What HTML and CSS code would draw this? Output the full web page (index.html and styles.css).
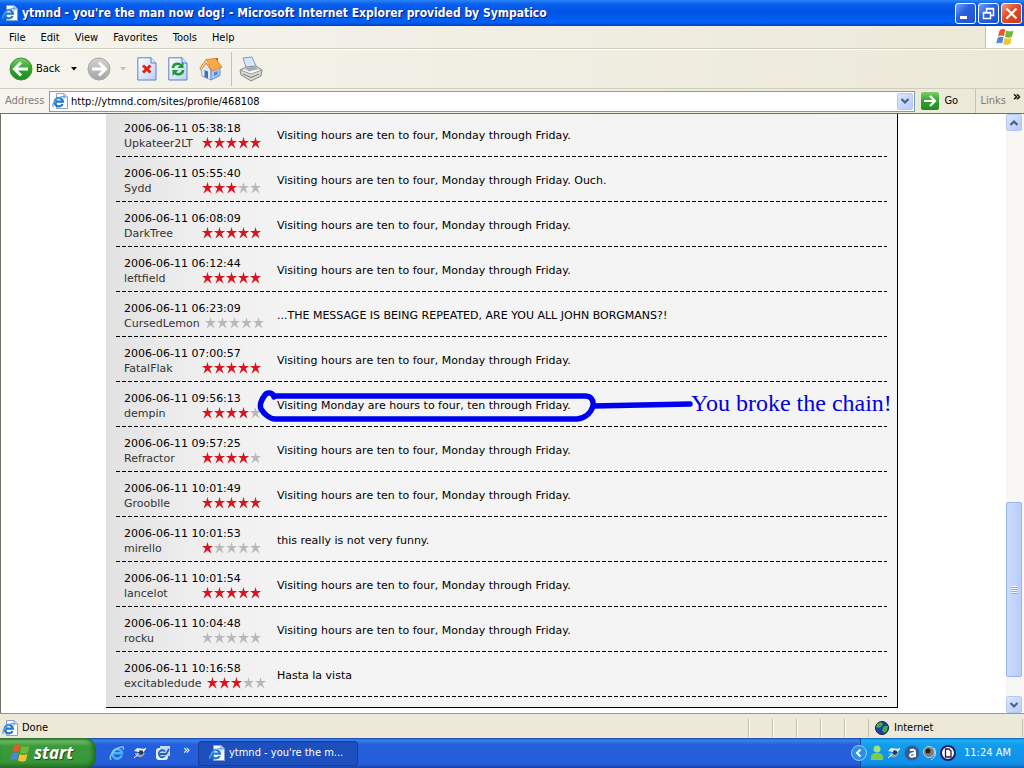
FILE: index.html
```html
<!DOCTYPE html>
<html lang="en">
<head>
<meta charset="utf-8">
<title>ytmnd - you're the man now dog!</title>
<link rel="stylesheet" href="styles.css">
</head>
<body>
<svg class="defs" aria-hidden="true">
  <defs>
    <linearGradient id="green" x1="0" y1="0" x2="0" y2="1"><stop offset="0" stop-color="#7ccf67"/><stop offset=".5" stop-color="#2fa32c"/><stop offset="1" stop-color="#1f8a22"/></linearGradient>
    <linearGradient id="grey" x1="0" y1="0" x2="0" y2="1"><stop offset="0" stop-color="#d2d2cf"/><stop offset="1" stop-color="#a4a4a2"/></linearGradient>
    <linearGradient id="paper" x1="0" y1="0" x2="1" y2="1"><stop offset="0" stop-color="#fff"/><stop offset="1" stop-color="#b9d0f8"/></linearGradient>
    <symbol id="five" viewBox="0 0 60 12">
      <g id="star"><path d="M5.500 0 6.600 4H11L7.500 6.600 9.500 11.500 5.500 8.300 1.500 11.500 3.500 6.600 0 4H4.400Z"/></g>
      <use href="#star" x="12"/><use href="#star" x="24"/><use href="#star" x="36"/><use href="#star" x="48"/>
    </symbol>
    <symbol id="e" viewBox="0 0 16 16">
      <path d="M12.700 10.600A4.800 4.800 0 1 1 13 8.200H5" fill="none" stroke="#4fb0f5" stroke-width="2.600"/>
      <path d="M2.400 14.500C-1.500 14 4 5 9.500 2.800 13.500 1 15.600 1.600 14 4.800" fill="none" stroke="#8fd2fb" stroke-width="1.300"/>
    </symbol>
    <symbol id="iepage" viewBox="0 0 16 16">
      <path d="M4.500.5H12L15.500 4V15.500H4.500Z" fill="#fff" stroke="#8a9fc8"/>
      <path d="M12 .5V4H15.500" fill="#c3d3ef" stroke="#8a9fc8"/>
      <path d="M10.600 11A4.200 4.200 0 1 1 11 8.600H4" fill="none" stroke="#2277cc" stroke-width="2.200"/>
      <path d="M1.500 14C-1 12 4 5.500 8.500 4 12 2.600 12.800 3.500 11.600 5.600" fill="none" stroke="#4fa8ea" stroke-width="1.200"/>
    </symbol>
    <symbol id="flag" viewBox="0 0 20 18">
      <path d="M4.500 2.400C6.500.8 8.600.8 10.300 1.800L8.900 8.200C7 7.200 5 7.400 3 8.700Z" fill="#e8562a"/>
      <path d="M11.300 2.400C13.500 3.700 16 3.500 18.500 2.400L17 8.800C14.600 10 12 9.900 9.900 8.800Z" fill="#6cbb36"/>
      <path d="M2.700 9.800C4.700 8.400 6.800 8.300 8.600 9.300L7.200 15.300C5.300 14.200 3.400 14.500 1.200 15.800Z" fill="#4a86df"/>
      <path d="M9.600 9.900C11.700 11 14.200 11 16.700 9.900L15.300 16C12.900 17.200 10.400 17 8.200 15.900Z" fill="#f9c02d"/>
    </symbol>
    <symbol id="doc" viewBox="0 0 20 24">
      <path d="M.8.8H14L19 6V23H.8Z" fill="url(#paper)" stroke="#5d7fc4"/>
      <path d="M14 .8V6H19" fill="#dbe6fb" stroke="#5d7fc4"/>
    </symbol>
    <symbol id="down" viewBox="0 0 10 10"><path d="M1.500 3 5 6.500 8.500 3" fill="none" stroke="#4d6185" stroke-width="2.200"/></symbol>
    <symbol id="sat" viewBox="0 0 14 12">
      <path d="M1 4 4 1 13 2 10 6Z" fill="#dfe5ea"/><path d="M2 6C2 11 10 12 12 6Z" fill="#9aa6af"/><circle cx="8" cy="5.500" r="2.200" fill="#2e3a48"/><path d="M1 11 5 7.500M10 3.500 13 1" stroke="#fff" fill="none"/>
    </symbol>
  </defs>
</svg>

<header class="titlebar">
  <svg class="i16"><use href="#iepage"/></svg>
  <h1>ytmnd - you're the man now dog! - Microsoft Internet Explorer provided by Sympatico</h1>
  <div class="winbtns">
    <button aria-label="Minimize"><svg viewBox="0 0 19 19"><path d="M4 13.500H11" stroke="#fff" stroke-width="3"/></svg></button>
    <button aria-label="Restore"><svg viewBox="0 0 19 19"><path d="M7.500 8V4.500H14.500V11.500H12M7 5H15M4.500 8.500H11.500V14.500H4.500ZM4 9H12" fill="none" stroke="#fff" stroke-width="1.500"/></svg></button>
    <button class="close" aria-label="Close"><svg viewBox="0 0 19 19"><path d="M4.500 4.500 14.500 14.500M14.500 4.500 4.500 14.500" stroke="#fff" stroke-width="2.200"/></svg></button>
  </div>
</header>

<nav class="menubar">
  <button>File</button><button>Edit</button><button>View</button><button>Favorites</button><button>Tools</button><button>Help</button>
  <div class="brand"><svg width="20" height="18"><use href="#flag"/></svg></div>
</nav>

<div class="toolbar">
  <button class="back"><svg width="24" height="24" viewBox="0 0 24 24"><circle cx="12" cy="12" r="11" fill="url(#green)" stroke="#3f8f38"/><path d="M19 12H6M12 5.500 5.500 12 12 18.500" fill="none" stroke="#fff" stroke-width="3"/></svg>Back</button>
  <button class="arrow" aria-label="Back history"><svg width="6" height="4" viewBox="0 0 6 4"><path d="M0 0H6L3 3.500Z"/></svg></button>
  <button aria-label="Forward"><svg width="24" height="24" viewBox="0 0 24 24"><circle cx="12" cy="12" r="11" fill="url(#grey)" stroke="#aaa9a4"/><path d="M5 12H18M12 5.500 18.500 12 12 18.500" fill="none" stroke="#fff" stroke-width="3"/></svg></button>
  <button class="arrow off" aria-label="Forward history"><svg width="6" height="4" viewBox="0 0 6 4"><path d="M0 0H6L3 3.500Z"/></svg></button>
  <div class="tools">
    <button aria-label="Stop"><svg width="20" height="24"><use href="#doc"/><path d="M6 8.500 13.500 15.500M13.500 8.500 6 15.500" stroke="#e8200e" stroke-width="3"/></svg></button>
    <button aria-label="Refresh"><svg width="20" height="24"><use href="#doc"/><path d="M5 11C5 7 10 5.500 13 8" fill="none" stroke="#1c9a2c" stroke-width="2.600"/><path d="M15.500 5V11H9.500Z" fill="#1c9a2c"/><path d="M15 13C15 17 10 18.500 7 16" fill="none" stroke="#1c9a2c" stroke-width="2.600"/><path d="M4.500 19V13H10.500Z" fill="#1c9a2c"/></svg></button>
    <button aria-label="Home"><svg width="24" height="24" viewBox="0 0 24 24"><path d="M16 1H19V8H16Z" fill="#c9552b"/><path d="M2 12 7 6 12 13V23L3 19Z" fill="#dfeafc" stroke="#8aa5d4"/><path d="M12 12 21 10V18.500L12 23Z" fill="#a9c6f3" stroke="#6e8dc4"/><path d="M7 2.500 16.500 1.500 23 10 13 14Z" fill="#f9a94a" stroke="#dd8a35"/><path d="M7 2.500 .8 11.500 2.500 12.500 7.200 6 12 13.500" fill="#fbd08b" stroke="#dd8a35"/><path d="M5.500 13 9 14.500V21.500L5.500 20Z" fill="#4a6eb5"/><path d="M15 15.500 18.500 14V17.500L15 19Z" fill="#5f83c8"/></svg></button>
  </div>
  <button class="print" aria-label="Print"><svg width="24" height="26" viewBox="0 0 24 26"><path d="M4 2 13 1 18 12 8 14Z" fill="#d7e5fb" stroke="#7f9ac8"/><path d="M1 14 7 11 17 10 23 14 22 20 12 25 2 19Z" fill="#d9d9d4" stroke="#888"/><path d="M1 14 12 18 23 14" fill="#f6f6f2" stroke="#9c9c98"/><path d="M6 12 16 10.500 19 13 10 15.500Z" fill="#a2aab6"/><path d="M4 18 12 21.500 20 18" fill="none" stroke="#777"/></svg></button>
</div>

<form class="address">
  <label for="url">Address</label>
  <div class="combo">
    <svg class="i16"><use href="#iepage"/></svg>
    <input id="url" type="text" value="http://ytmnd.com/sites/profile/468108">
    <button type="button" class="xp" aria-label="Show history"><svg><use href="#down"/></svg></button>
  </div>
  <button type="button" class="go"><svg width="18" height="18" viewBox="0 0 18 18"><rect width="18" height="18" rx="2" fill="url(#green)"/><path d="M3 9H14M9 4 14 9 9 14" fill="none" stroke="#fff" stroke-width="2.200"/></svg>Go</button>
  <div class="links"><span>Links</span><b>»</b></div>
</form>

<div class="view">
  <main class="page">
    <ul class="comments">
      <li><div class="who"><time>2006-06-11 05:38:18</time><div><a href="#">Upkateer2LT</a><svg class="stars"><use href="#five"/><svg width="60"><use class="on" href="#five" width="60" height="12"/></svg></svg></div></div><p>Visiting hours are ten to four, Monday through Friday.</p></li>
      <li><div class="who"><time>2006-06-11 05:55:40</time><div><a href="#">Sydd</a><svg class="stars"><use href="#five"/><svg width="36"><use class="on" href="#five" width="60" height="12"/></svg></svg></div></div><p>Visiting hours are ten to four, Monday through Friday. Ouch.</p></li>
      <li><div class="who"><time>2006-06-11 06:08:09</time><div><a href="#">DarkTree</a><svg class="stars"><use href="#five"/><svg width="60"><use class="on" href="#five" width="60" height="12"/></svg></svg></div></div><p>Visiting hours are ten to four, Monday through Friday.</p></li>
      <li><div class="who"><time>2006-06-11 06:12:44</time><div><a href="#">leftfield</a><svg class="stars"><use href="#five"/><svg width="60"><use class="on" href="#five" width="60" height="12"/></svg></svg></div></div><p>Visiting hours are ten to four, Monday through Friday.</p></li>
      <li><div class="who"><time>2006-06-11 06:23:09</time><div><a href="#">CursedLemon</a><svg class="stars"><use href="#five"/></svg></div></div><p>...THE MESSAGE IS BEING REPEATED, ARE YOU ALL JOHN BORGMANS?!</p></li>
      <li><div class="who"><time>2006-06-11 07:00:57</time><div><a href="#">FatalFlak</a><svg class="stars"><use href="#five"/><svg width="60"><use class="on" href="#five" width="60" height="12"/></svg></svg></div></div><p>Visiting hours are ten to four, Monday through Friday.</p></li>
      <li><div class="who"><time>2006-06-11 09:56:13</time><div><a href="#">dempin</a><svg class="stars"><use href="#five"/><svg width="48"><use class="on" href="#five" width="60" height="12"/></svg></svg></div></div><p>Visiting Monday are hours to four, ten through Friday.</p>
        <div class="note"><svg width="436" height="36" viewBox="0 0 436 36"><path d="M17 8C16 3 10 3 8 6 5 10 2 15 4 20 7 25 13 30 18 30H320C328 29 334 24 336 17 337 10 333 7 328 7H17M336 17 433 15" fill="none" stroke="#0000f0" stroke-width="5.500" stroke-linecap="round" stroke-linejoin="round"/></svg><span>You broke the chain!</span></div></li>
      <li><div class="who"><time>2006-06-11 09:57:25</time><div><a href="#">Refractor</a><svg class="stars"><use href="#five"/><svg width="48"><use class="on" href="#five" width="60" height="12"/></svg></svg></div></div><p>Visiting hours are ten to four, Monday through Friday.</p></li>
      <li><div class="who"><time>2006-06-11 10:01:49</time><div><a href="#">Grooblle</a><svg class="stars"><use href="#five"/><svg width="60"><use class="on" href="#five" width="60" height="12"/></svg></svg></div></div><p>Visiting hours are ten to four, Monday through Friday.</p></li>
      <li><div class="who"><time>2006-06-11 10:01:53</time><div><a href="#">mirello</a><svg class="stars"><use href="#five"/><svg width="12"><use class="on" href="#five" width="60" height="12"/></svg></svg></div></div><p>this really is not very funny.</p></li>
      <li><div class="who"><time>2006-06-11 10:01:54</time><div><a href="#">lancelot</a><svg class="stars"><use href="#five"/><svg width="60"><use class="on" href="#five" width="60" height="12"/></svg></svg></div></div><p>Visiting hours are ten to four, Monday through Friday.</p></li>
      <li><div class="who"><time>2006-06-11 10:04:48</time><div><a href="#">rocku</a><svg class="stars"><use href="#five"/></svg></div></div><p>Visiting hours are ten to four, Monday through Friday.</p></li>
      <li><div class="who"><time>2006-06-11 10:16:58</time><div><a href="#">excitabledude</a><svg class="stars"><use href="#five"/><svg width="36"><use class="on" href="#five" width="60" height="12"/></svg></svg></div></div><p>Hasta la vista</p></li>
    </ul>
  </main>
  <div class="scroll">
    <button class="xp up" aria-label="Scroll up"><svg><use href="#down"/></svg></button>
    <div class="track"><div class="thumb"><i></i></div></div>
    <button class="xp" aria-label="Scroll down"><svg><use href="#down"/></svg></button>
  </div>
</div>

<footer class="status">
  <svg class="i16"><use href="#iepage"/></svg><span class="done">Done</span>
  <i></i><i></i><i></i><i></i><i></i>
  <div class="zone"><svg width="14" height="14" viewBox="0 0 14 14"><circle cx="7" cy="7" r="6.500" fill="#1c3fae" stroke="#10204a"/><path d="M2 3 6 1 8 3 6 6 3 7 1 6ZM9 5 13 5 12 10 9 12 7 9Z" fill="#3cae4a"/></svg>Internet</div>
</footer>

<div class="taskbar">
  <button class="start"><svg width="22" height="20"><use href="#flag"/></svg>start</button>
  <div class="quick">
    <button aria-label="Internet Explorer"><svg class="i16"><use href="#e"/></svg></button>
    <button aria-label="Messenger"><svg width="14" height="12"><use href="#sat"/></svg></button>
    <button aria-label="Outlook Express"><svg class="i16" viewBox="0 0 16 16"><rect x="1" y="3" width="12" height="12" rx="3" fill="#e8f1fb"/><path d="M5 1H15V11H5Z" fill="#c2dbf5"/><path d="M10 11A3.500 3.500 0 1 1 10 6.500M5 9H11L14 4" fill="none" stroke="#1f62bd" stroke-width="1.800"/></svg></button>
    <span>»</span>
  </div>
  <button class="task"><svg class="i16"><use href="#iepage"/></svg>ytmnd - you're the m...</button>
  <div class="tray">
    <button class="chev" aria-label="Show hidden icons"><svg width="16" height="16" viewBox="0 0 16 16"><circle cx="8" cy="8" r="7.500" fill="#2f8fe8" stroke="#8fd0fb"/><path d="M9.500 4.500 6 8 9.500 11.500" fill="none" stroke="#fff" stroke-width="2"/></svg></button>
    <svg width="14" height="16" viewBox="0 0 14 16"><circle cx="7" cy="4" r="3.500" fill="#a5e07c"/><path d="M1 15C0 9 3 8 7 8S14 9 13 15Z" fill="#7dcb52"/></svg>
    <svg width="14" height="12"><use href="#sat"/></svg>
    <svg width="16" height="16" viewBox="0 0 16 16"><circle cx="8" cy="8" r="7.500" fill="#3a5a92"/><path d="M6 5.500C8 4 11 4.500 11 7V12M11 8C7 8 6 9 6 10.500 6.500 12.500 10 12 11 10" fill="none" stroke="#fff" stroke-width="2"/></svg>
    <svg width="14" height="16" viewBox="0 0 14 16"><circle cx="6" cy="7" r="5.500" fill="#787d80" stroke="#c9ced0"/><circle cx="5" cy="6" r="2.500" fill="#222"/><path d="M11 3C14 8 12 13 8 15" fill="none" stroke="#cfe6fa"/></svg>
    <svg width="16" height="16" viewBox="0 0 16 16"><circle cx="8" cy="8" r="7" fill="#fff" stroke="#141b78" stroke-width="2"/><path d="M5.500 4H9L11 6V12H5.500Z" fill="#fff" stroke="#222" stroke-width="1.300"/></svg>
    <time>11:24 AM</time>
  </div>
</div>
</body>
</html>
```

FILE: styles.css
```css
* { box-sizing: border-box; }
body {
  margin: 0;
  height: 100vh;
  display: flex;
  flex-direction: column;
  overflow: hidden;
  font: 11px/14px "DejaVu Sans Condensed", "DejaVu Sans", sans-serif;
  color: #000;
  background: #ece9d8;
}
button {
  border: 0;
  padding: 0;
  background: none;
  font: inherit;
  color: inherit;
  display: flex;
  align-items: center;
}
svg { flex: none; display: block; }
.defs { position: absolute; width: 0; height: 0; }
.i16 { width: 16px; height: 16px; }

.titlebar {
  flex: none;
  height: 26px;
  display: flex;
  align-items: center;
  gap: 4px;
  padding: 0 2px;
  background: linear-gradient(#2a86f8 0, #0a5fee 4px, #0054e3 12px, #0062fa 22px, #0040c0 26px);
}
.titlebar h1 {
  flex: 1;
  margin: 0;
  font: bold 12px/18px "DejaVu Sans Condensed", "DejaVu Sans", sans-serif;
  color: #fff;
  text-shadow: 1px 1px #0a1883;
  white-space: nowrap;
}
.winbtns { display: flex; gap: 2px; }
.winbtns button {
  width: 21px;
  height: 21px;
  border: 1px solid #fff;
  border-radius: 3px;
  background: linear-gradient(135deg, #7ba4f8, #2a62e0 40%, #1e50d0);
}
.winbtns .close { background: linear-gradient(135deg, #f0a088, #df5030 40%, #c83a14); }

.menubar {
  flex: none;
  height: 23px;
  display: flex;
  align-items: center;
  gap: 15px;
  padding-left: 9px;
  background: linear-gradient(90deg, #f5f4ee, #ece9d8);
  border-bottom: 1px solid #d0cdbf;
}
.menubar button { padding-top: 2px; }
.brand {
  align-self: stretch;
  margin-left: auto;
  width: 39px;
  display: flex;
  align-items: center;
  justify-content: center;
  background: #fff;
  border-left: 1px solid #c5c2b0;
}

.toolbar {
  flex: none;
  height: 40px;
  display: flex;
  align-items: center;
  padding-left: 9px;
  background: linear-gradient(90deg, #f5f4ee, #ece9d8);
  border-top: 1px solid #fff;
  border-bottom: 1px solid #d0cdbf;
}
.back { gap: 3px; }
.arrow { width: 27px; justify-content: center; }
.off { fill: #c2bfb0; width: 24px; }
.tools {
  display: flex;
  gap: 11px;
  padding: 0 8px 0 2px;
  height: 34px;
  border-right: 1px solid #c5c2b0;
}
.print { padding-left: 7px; }

.address {
  flex: none;
  height: 24px;
  margin: 0;
  display: flex;
  align-items: center;
  padding: 0 3px 0 5px;
  background: linear-gradient(90deg, #f5f4ee, #ece9d8);
}
.address label { width: 44px; color: #7f7c73; }
.combo {
  flex: 1;
  height: 21px;
  display: flex;
  align-items: center;
  padding: 0 1px 0 2px;
  background: #fff;
  border: 1px solid #7f9db9;
}
.combo input {
  flex: 1;
  min-width: 0;
  border: 0;
  outline: 0;
  padding: 1px 3px 0;
  font: inherit;
  background: none;
}
.xp {
  flex: none;
  width: 16px;
  height: 17px;
  justify-content: center;
  border: 1px solid #b4c8f4;
  border-radius: 2px;
  background: linear-gradient(135deg, #dbe6ff, #b5cbfa);
}
.xp svg { width: 10px; height: 10px; }
.up svg { transform: scaleY(-1); }
.go { width: 54px; margin-left: 6px; gap: 5px; }
.links {
  align-self: stretch;
  display: flex;
  align-items: center;
  gap: 7px;
  padding-left: 4px;
  border-left: 1px solid #c5c2b0;
  color: #7f7c73;
}
.links b { color: #000; font-size: 14px; align-self: flex-start; }

.view {
  flex: 1;
  min-height: 0;
  display: flex;
  border: solid #716f64;
  border-width: 1px 0 0 1px;
  background: #fff;
}
.page {
  flex: 1;
  min-width: 0;
  display: flex;
  align-items: flex-end;
  justify-content: center;
  padding: 0 3px 5px 0;
  overflow: hidden;
}
.comments {
  width: 792px;
  margin: 0;
  padding: 0 10px 10px;
  list-style: none;
  border: solid #000;
  border-width: 0 1px 1px 0;
  background: linear-gradient(90deg, #e2e2e2, #eeeeee 90px, #f4f4f4 190px);
  font: 11px/15px "DejaVu Sans", sans-serif;
}
.comments li {
  position: relative;
  display: flex;
  align-items: center;
  min-height: 45px;
  padding: 8px 8px 6px;
  background: repeating-linear-gradient(90deg, #000 0 4px, transparent 4px 6px) left bottom / 100% 1px no-repeat;
}
.who { width: 153px; }
.who time { display: block; }
.who div { display: flex; align-items: center; }
.who a { min-width: 73px; color: #333; text-decoration: none; }
.stars { width: 60px; height: 12px; margin-left: 5px; fill: #b8b8b8; }
.stars .on { fill: #e0101c; }
.comments p { margin: 0; }
.note {
  position: absolute;
  left: 141px;
  top: 7px;
  display: flex;
  align-items: center;
  font: 24px/28px "Liberation Serif", serif;
  color: #0000e0;
  white-space: nowrap;
}
.note span { margin: -8px 0 0 -2px; }

.scroll {
  flex: none;
  width: 18px;
  display: flex;
  flex-direction: column;
  padding: 0 2px 0 0;
  background: #f8f7f3;
}
.track {
  flex: 1;
  display: flex;
  align-items: flex-end;
  padding-bottom: 19px;
}
.thumb {
  width: 16px;
  height: 32%;
  display: flex;
  align-items: center;
  justify-content: center;
  border: 1px solid #98b4ee;
  border-radius: 2px;
  background: linear-gradient(90deg, #cddcfe, #b8cdfb);
}
.thumb i {
  width: 6px;
  height: 8px;
  background: repeating-linear-gradient(#f2f6ff 0 1px, #8fabe6 1px 2px);
}

.status {
  flex: none;
  height: 25px;
  display: flex;
  align-items: center;
  padding: 3px 1px 0 2px;
  border-top: 1px solid #9c998a;
}
.done { flex: 1; padding-left: 4px; }
.status i {
  width: 24px;
  height: 18px;
  border-left: 1px solid #c5c2b0;
  box-shadow: inset 1px 0 #fff;
}
.zone {
  width: 155px;
  height: 18px;
  display: flex;
  align-items: center;
  gap: 5px;
  padding-left: 6px;
  border: solid #c5c2b0;
  border-width: 0 1px;
}

.taskbar {
  flex: none;
  height: 30px;
  display: flex;
  align-items: center;
  color: #fff;
  background: linear-gradient(#1941a5 0, #3b82ee 2px, #245edb 7px, #245edb 26px, #1941a5);
}
.start {
  align-self: stretch;
  width: 96px;
  padding-left: 9px;
  gap: 3px;
  border-radius: 0 10px 10px 0;
  background: linear-gradient(#2e7a2e 0, #6cbb66 3px, #3c9a3c 8px, #379637 24px, #2a702a);
  box-shadow: inset -3px 0 4px #1f6a1f;
  font: italic bold 17px/20px "Open Sans", "Noto Sans", sans-serif;
  text-shadow: 1px 1px 1px #1c4a1c;
}
.quick { width: 102px; display: flex; align-items: center; gap: 8px; padding-left: 13px; }
.quick span { align-self: flex-start; padding-left: 4px; font-size: 13px; line-height: 10px; }
.task {
  width: 160px;
  height: 25px;
  gap: 4px;
  padding-left: 10px;
  border: 1px solid #163c93;
  border-radius: 3px;
  background: #1d4fbd;
  white-space: nowrap;
}
.tray {
  align-self: stretch;
  width: 164px;
  margin-left: auto;
  display: flex;
  align-items: center;
  gap: 3px;
  padding-right: 13px;
  background: linear-gradient(#0c5fb8 0, #1fb0f8 2px, #129cec 7px, #0f8fe6 26px, #0a62b4);
  border-left: 1px solid #0d4a9c;
}
.chev { margin-left: -10px; }
.tray time { margin-left: auto; white-space: nowrap; }
```
